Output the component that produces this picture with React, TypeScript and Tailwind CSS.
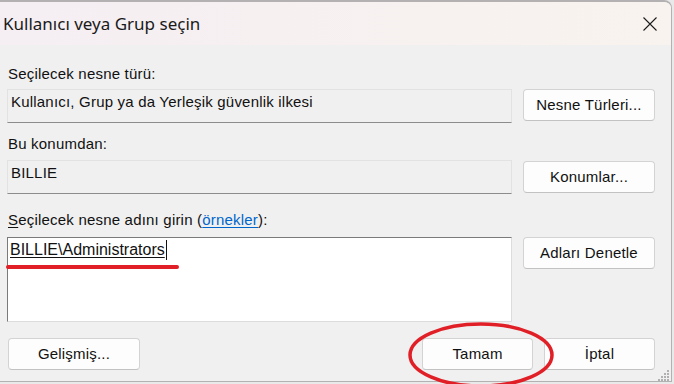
const ui = { fontFamily: '"Liberation Sans", Arial, sans-serif' };
const title = { fontFamily: '"Noto Sans", "Open Sans", sans-serif' };

function Btn({ children, className = "" }: { children: React.ReactNode; className?: string }) {
  return (
    <button
      type="button"
      className={
        "h-[32px] rounded-[4px] border border-[#d3d3d3] border-b-[#c2c2c2] bg-[#fdfdfd] text-[15px] text-[#111] " +
        className
      }
    >
      {children}
    </button>
  );
}

function ReadField({ value }: { value: string }) {
  return (
    <div className="h-[34px] w-[505px] border border-[#e2e2e2] border-b-[#8c8c8c] bg-[#f0f0f0] pl-[3px] pt-[3px] text-[15px] leading-[18px] text-[#111]">
      {value}
    </div>
  );
}

export default function App() {
  return (
    <div className="relative h-[384px] w-[674px] overflow-hidden bg-[#e9e9e9]" style={ui}>
      <div className="flex h-[382px] w-[672px] flex-col overflow-hidden rounded-tr-[8px] border-b border-r border-t-2 border-[#b4b1b3] bg-[#f0f0f0] tracking-[0.2px]">
        {/* title bar */}
        <div className="flex h-[43px] shrink-0 items-center justify-between bg-gradient-to-r from-[#f5eef3] to-[#f8f3ee] pl-[3px] pr-[13px]">
          <span className="text-[17px] tracking-normal text-[#1a1a1a]" style={title}>
            Kullanıcı veya Grup seçin
          </span>
          <svg width="16" height="16" viewBox="0 0 16 16">
            <path d="M1.5 1.5 L14.5 14.5 M14.5 1.5 L1.5 14.5" stroke="#1c1c1c" strokeWidth="1.1" fill="none" />
          </svg>
        </div>

        {/* body */}
        <div className="flex flex-col pl-[7px]">
          <div className="mt-[20px] pl-[1px] text-[15px] leading-[18px] text-[#111]">Seçilecek nesne türü:</div>
          <div className="mt-[6px] flex items-start gap-[11px]">
            <ReadField value="Kullanıcı, Grup ya da Yerleşik güvenlik ilkesi" />
            <Btn className="w-[132px]">Nesne Türleri...</Btn>
          </div>

          <div className="mt-[12px] pl-[1px] text-[15px] leading-[18px] text-[#111]">Bu konumdan:</div>
          <div className="mt-[7px] flex items-start gap-[11px]">
            <ReadField value="BILLIE" />
            <Btn className="mt-[1px] w-[132px]">Konumlar...</Btn>
          </div>

          <div className="mt-[17px] pl-[1px] text-[15px] leading-[18px] text-[#111]">
            <span className="underline underline-offset-2">S</span>eçilecek nesne adını girin (
            <span className="text-[#0066cc] underline underline-offset-2">örnekler</span>):
          </div>
          <div className="mt-[8px] flex items-start gap-[11px]">
            <div className="relative h-[85px] w-[505px] border border-[#dcdcdc] border-l-[#7a7a7a] border-t-[#7a7a7a] bg-white pl-[2px] pt-[2px]">
              <div className="flex items-center text-[16px] leading-[20px] tracking-normal text-[#111]">
                <span className="underline underline-offset-2">BILLIE\Administrators</span>
                <span className="ml-[1px] h-[20px] w-px bg-[#111]" />
              </div>
              <span className="pointer-events-none absolute left-[-2px] top-[27px] h-[4px] w-[173px] rounded-full bg-[#e01f26]" />
            </div>
            <Btn className="w-[132px]">Adları Denetle</Btn>
          </div>

          <div className="mt-[16px] flex items-start">
            <Btn className="ml-[1px] w-[132px]">Gelişmiş...</Btn>
            <div className="ml-auto mr-[16px] flex gap-[11px]">
              <Btn className="w-[111px]">Tamam</Btn>
              <Btn className="w-[111px]">İptal</Btn>
            </div>
          </div>
        </div>
      </div>

      {/* resize grip */}
      <svg className="absolute left-[658px] top-[369px]" width="12" height="12" viewBox="0 0 12 12">
        {[
          [9, 1], [6, 4], [9, 4], [3, 7], [6, 7], [9, 7], [0, 10], [3, 10], [6, 10], [9, 10],
        ].map(([x, y], i) => (
          <rect key={i} x={x} y={y} width="2" height="2" fill="#b0b0b0" />
        ))}
      </svg>

      {/* red annotation ellipse around Tamam */}
      <svg className="pointer-events-none absolute left-[404px] top-[318px]" width="156" height="70" viewBox="0 0 156 70">
        <ellipse cx="77" cy="37" rx="71" ry="31" fill="none" stroke="#e01f26" strokeWidth="3.5" />
      </svg>
    </div>
  );
}
